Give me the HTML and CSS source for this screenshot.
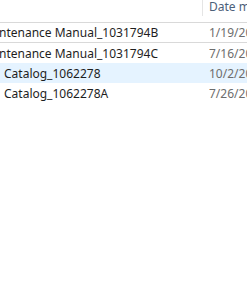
FILE: index.html
```html
<!DOCTYPE html>
<html>
<head>
<meta charset="utf-8">
<link rel="stylesheet" href="styles.css">
</head>
<body>
<div class="list">
  <div class="header">
    <div class="hname"></div>
    <div class="hdate">Date modified</div>
  </div>
  <div class="row focus">
    <div class="name shift">ntenance Manual_1031794B</div>
    <div class="date">1/19/2017 10:12 AM</div>
  </div>
  <div class="row">
    <div class="name shift">ntenance Manual_1031794C</div>
    <div class="date">7/16/2018 2:40 PM</div>
  </div>
  <div class="row hover">
    <div class="name">Catalog_1062278</div>
    <div class="date">10/2/2017 9:05 AM</div>
  </div>
  <div class="row">
    <div class="name">Catalog_1062278A</div>
    <div class="date">7/26/2018 3:18 PM</div>
  </div>
</div>
</body>
</html>
```
FILE: styles.css
```css
html, body {
  margin: 0;
  padding: 0;
  background: #ffffff;
  overflow: hidden;
}
body {
  width: 247px;
  height: 281px;
  font-family: "Noto Sans", "Open Sans", sans-serif;
  font-size: 12px;
}
.list {
  display: flex;
  flex-direction: column;
  width: 247px;
}
.header {
  display: flex;
  height: 22px;
}
.hname {
  width: 202px;
  flex: none;
  border-right: 1px solid #e5e5e5;
  height: 16px;
}
.hdate {
  padding-left: 6px;
  color: #4c607a;
  white-space: nowrap;
  line-height: 14px;
  padding-top: 0px;
}
.row {
  display: flex;
  height: 20px;
  align-items: center;
  white-space: nowrap;
  border-top: 1px solid transparent;
  border-bottom: 1px solid transparent;
  box-sizing: border-box;
}
.row.focus {
  border-top-color: #d9d9d9;
  border-bottom-color: #d9d9d9;
  height: 21px;
}
.row.hover {
  background: #e5f3ff;
}
.name {
  width: 209px;
  flex: none;
  color: #1e1e1e;
  padding-left: 4px;
  box-sizing: border-box;
  overflow: hidden;
}
.name.shift {
  padding-left: 0;
  margin-left: -1px;
  width: 210px;
}
.date {
  color: #6d6d6d;
  overflow: hidden;
}
```
